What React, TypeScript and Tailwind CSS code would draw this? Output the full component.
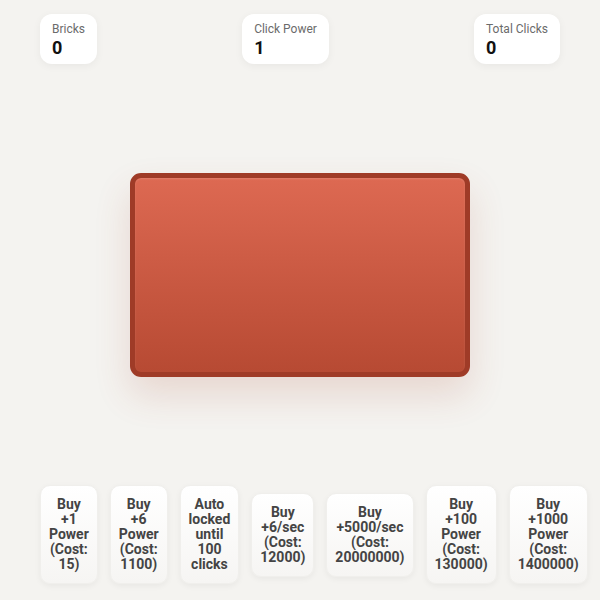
const font = { fontFamily: 'Roboto, "Liberation Sans", sans-serif' };

const upgrades = [
  'Buy +1 Power (Cost: 15)',
  'Buy +6 Power (Cost: 1100)',
  'Auto locked until 100 clicks',
  'Buy +6/sec (Cost: 12000)',
  'Buy +5000/sec (Cost: 20000000)',
  'Buy +100 Power (Cost: 130000)',
  'Buy +1000 Power (Cost: 1400000)',
];

function Stat({ label, value }: { label: string; value: string }) {
  return (
    <div className="bg-white rounded-xl px-3 pt-[7px] pb-[5px] shadow-[0_2px_8px_rgba(0,0,0,0.05)]">
      <div className="text-xs leading-4 text-[#6b6b6b]">{label}</div>
      <div className="text-lg leading-[22px] font-bold text-[#111]">{value}</div>
    </div>
  );
}

export default function App() {
  return (
    <div className="h-screen w-full flex flex-col bg-[#f4f3f0] overflow-hidden" style={font}>
      <div className="flex justify-between items-start px-10 pt-3.5">
        <Stat label="Bricks" value="0" />
        <Stat label="Click Power" value="1" />
        <Stat label="Total Clicks" value="0" />
      </div>

      <div className="flex-1 flex items-center justify-center">
        <button className="w-[340px] h-[204px] rounded-[11px] border-[5px] border-[#9f3b27] bg-gradient-to-b from-[#dd6952] to-[#b74a33] shadow-[0_18px_36px_rgba(170,70,45,0.16),inset_0_1px_2px_rgba(255,255,255,0.15)]" />
      </div>

      <div className="flex items-center gap-3 pl-10 pb-4">
        {upgrades.map((u) => (
          <button
            key={u}
            className="w-min shrink-0 px-2 py-[11px] rounded-[10px] border border-[#f0efec] bg-gradient-to-b from-white to-[#f6f5f3] shadow-[0_2px_6px_rgba(0,0,0,0.05)] text-sm leading-[15px] font-bold text-[#444] text-center"
          >
            {u}
          </button>
        ))}
        <div className="shrink-0 w-16 h-10 rounded-[10px] border border-[#ebeae7] bg-[#f7f6f4] opacity-60" />
      </div>
    </div>
  );
}
